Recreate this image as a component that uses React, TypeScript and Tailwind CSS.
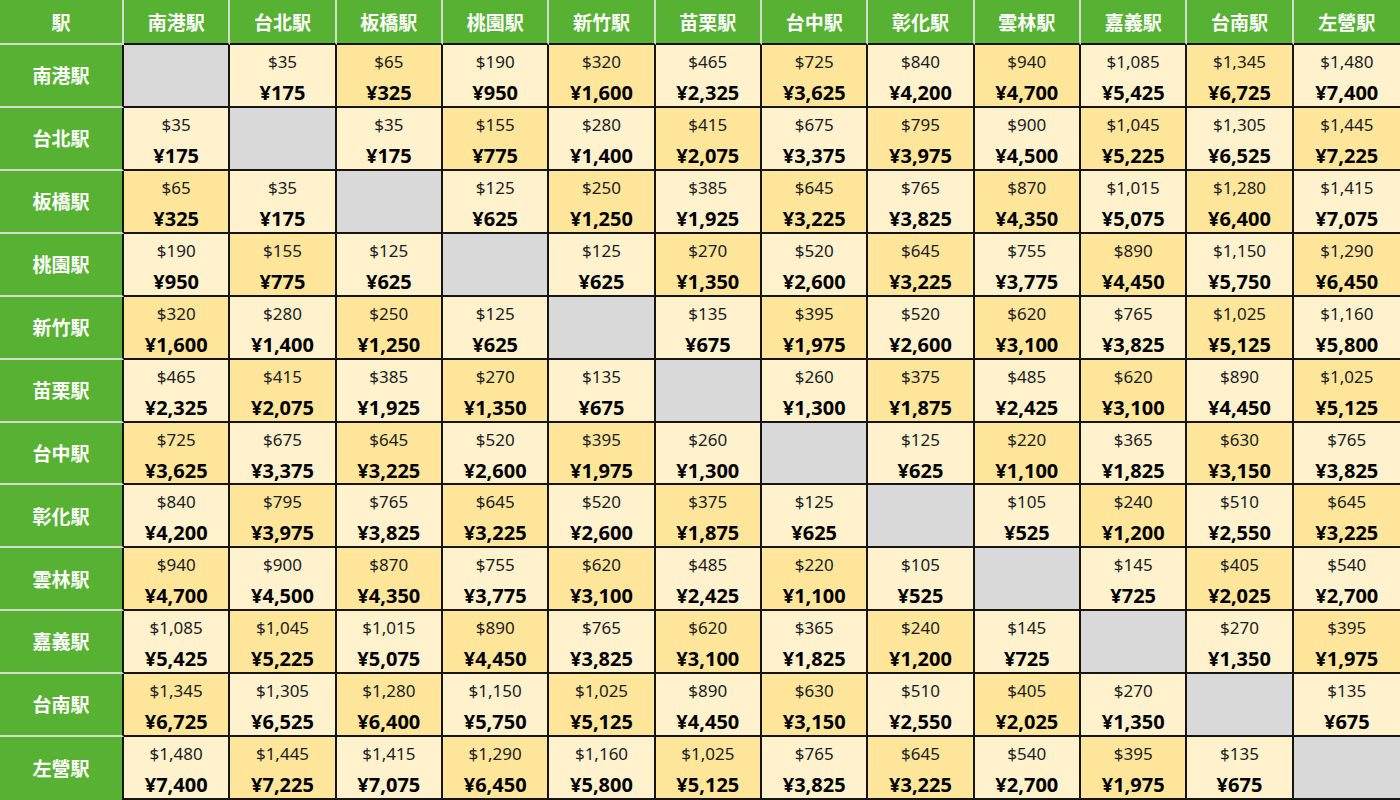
import React from 'react';

const stations = ['南港駅', '台北駅', '板橋駅', '桃園駅', '新竹駅', '苗栗駅', '台中駅', '彰化駅', '雲林駅', '嘉義駅', '台南駅', '左營駅'];

// upper triangle of fares in dollars, row i lists stations i+1..end
const upper: number[][] = [
  [35, 65, 190, 320, 465, 725, 840, 940, 1085, 1345, 1480],
  [35, 155, 280, 415, 675, 795, 900, 1045, 1305, 1445],
  [125, 250, 385, 645, 765, 870, 1015, 1280, 1415],
  [125, 270, 520, 645, 755, 890, 1150, 1290],
  [135, 395, 520, 620, 765, 1025, 1160],
  [260, 375, 485, 620, 890, 1025],
  [125, 220, 365, 630, 765],
  [105, 240, 510, 645],
  [145, 405, 540],
  [270, 395],
  [135],
];

function fare(a: number, b: number) {
  if (a === b) return null;
  const i = Math.min(a, b);
  const j = Math.max(a, b);
  return upper[i][j - i - 1];
}

const fmt = (n: number) => n.toLocaleString('en-US');

export default function App() {
  return (
    <div
      className="w-[1400px] h-[800px] grid grid-cols-[124px_repeat(12,minmax(0,1fr))] grid-rows-[45px_repeat(12,minmax(0,1fr))] bg-white"
      style={{ fontFamily: '"Noto Sans", "Noto Sans CJK JP", sans-serif' }}
    >
      {/* header row */}
      <div className="bg-[#57b132] border-r-2 border-b-2 border-[#d3dccd] flex items-center justify-center pt-[2px] text-white font-bold text-[19px] [font-family:'Noto_Sans_CJK_JP',sans-serif]">
        駅
      </div>
      {stations.map((s, c) => (
        <div
          key={s}
          className={`bg-[#57b132] border-b-2 border-b-[#151515] flex items-center justify-center pt-[2px] text-white font-bold text-[19px] [font-family:'Noto_Sans_CJK_JP',sans-serif] ${
            c < 11 ? 'border-r-2 border-r-[#d3dccd]' : ''
          }`}
        >
          {s}
        </div>
      ))}

      {stations.map((rowName, r) => (
        <React.Fragment key={rowName}>
          <div
            className={`bg-[#57b132] border-r-2 border-r-[#151515] flex items-center justify-center text-white font-bold text-[19px] [font-family:'Noto_Sans_CJK_JP',sans-serif] ${
              r < 11 ? 'border-b-2 border-b-[#d3dccd]' : ''
            }`}
          >
            {rowName}
          </div>
          {stations.map((_, c) => {
            const v = fare(r, c);
            const bg = v === null ? 'bg-[#d9d9d9]' : (r + c) % 2 === 0 ? 'bg-[#ffe69b]' : 'bg-[#fff2cd]';
            return (
              <div
                key={c}
                className={`${bg} border-b-2 border-[#151515] ${c < 11 ? 'border-r-2' : ''} flex flex-col items-center pt-[5px] gap-[5px]`}
              >
                {v !== null && (
                  <>
                    <span className="text-[17px] leading-[24px] text-[#1c1c1c]">${fmt(v)}</span>
                    <span className="text-[20px] leading-[28px] font-bold text-black">¥{fmt(v * 5)}</span>
                  </>
                )}
              </div>
            );
          })}
        </React.Fragment>
      ))}
    </div>
  );
}
